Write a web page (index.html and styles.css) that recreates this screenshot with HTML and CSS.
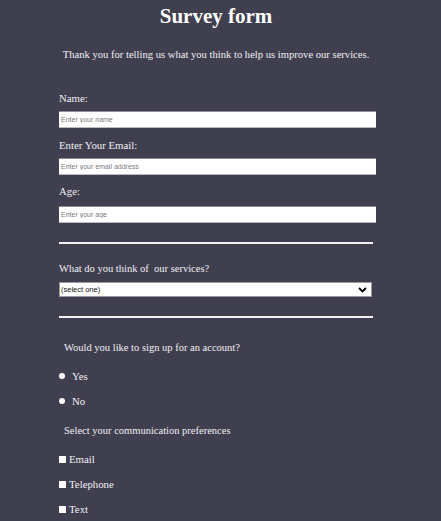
FILE: index.html
```html
<!DOCTYPE html>
<html lang="en">
<head>
<meta charset="utf-8">
<title>Survey form</title>
<link rel="stylesheet" href="styles.css">
</head>
<body>
<main class="page">
  <h1 class="title">Survey form</h1>
  <p class="intro">Thank you for telling us what you think to help us improve our services.</p>
  <form class="form">
    <label class="label label-name" for="name">Name:</label>
    <input class="field" id="name" type="text" placeholder="Enter your name">
    <label class="label label-email" for="email">Enter Your Email:</label>
    <input class="field" id="email" type="email" placeholder="Enter your email address">
    <label class="label label-age" for="age">Age:</label>
    <input class="field" id="age" type="text" placeholder="Enter your age">
    <hr class="rule rule-first">
    <label class="label label-services" for="services">What do you think of&nbsp; our services?</label>
    <div class="select-wrap">
      <select class="select" id="services">
        <option>(select one)</option>
        <option>Excellent</option>
        <option>Good</option>
        <option>Poor</option>
      </select>
      <svg class="chevron" width="9" height="6" viewBox="0 0 9 6"><path d="M1 1 L4.5 4.5 L8 1" fill="none" stroke="#000" stroke-width="1.8"/></svg>
    </div>
    <hr class="rule rule-second">
    <p class="question q-account">Would you like to sign up for an account?</p>
    <label class="choice choice-yes"><input class="radio" type="radio" name="account">Yes</label>
    <label class="choice choice-no"><input class="radio" type="radio" name="account">No</label>
    <p class="question q-prefs">Select your communication preferences</p>
    <label class="check check-first"><input class="box" type="checkbox">Email</label>
    <label class="check"><input class="box" type="checkbox">Telephone</label>
    <label class="check"><input class="box" type="checkbox">Text</label>
  </form>
</main>
</body>
</html>
```
FILE: styles.css
```css
html, body {
  margin: 0;
  padding: 0;
  background: #403f4f;
}
body {
  color: #f0f0f4;
  font-family: "Liberation Serif", "Times New Roman", serif;
  height: 521px;
  overflow: hidden;
}
.page {
  width: 441px;
  padding-right: 6px;
  box-sizing: border-box;
}
.title {
  margin: 2px 0 0;
  padding-right: 3px;
  font-size: 21px;
  line-height: 28px;
  font-weight: bold;
  text-align: center;
  color: #ffffff;
}
.intro {
  margin: 17px 0 0;
  padding-right: 3px;
  font-size: 10.6px;
  line-height: 16px;
  text-align: center;
}
.form {
  width: 317px;
  margin: 0 auto;
  display: flex;
  flex-direction: column;
  align-items: flex-start;
}
.label {
  display: block;
  font-size: 10.8px;
  line-height: 16px;
}
.label-name { margin-top: 27px; }
.label-email { margin-top: 9px; }
.label-age { margin-top: 8px; }
.field {
  margin-top: 5px;
  width: 317px;
  height: 17px;
  box-sizing: border-box;
  border: 0;
  border-top: 1px solid #8d8c97;
  border-bottom: 1px solid #b9b9c0;
  padding: 0 2px;
  background: #fff;
  font-family: "Liberation Sans", Arial, sans-serif;
  font-size: 7px;
  color: #333;
  outline: none;
}
.field::placeholder { color: #7a7a7a; }
.label-age + .field { margin-top: 7px; }
.rule {
  width: 314px;
  height: 2px;
  border: 0;
  background: #f4f4f6;
  margin: 0;
}
.rule-first { margin-top: 19px; }
.label-services { margin-top: 17px; font-size: 10.5px; }
.select-wrap {
  position: relative;
  margin-top: 5px;
  width: 313px;
  height: 15px;
}
.select {
  display: block;
  appearance: none;
  -webkit-appearance: none;
  width: 313px;
  height: 15px;
  box-sizing: border-box;
  border: 1px solid #9a99a3;
  background: #fff;
  padding: 0 1px;
  font-family: "Liberation Sans", Arial, sans-serif;
  font-size: 7.5px;
  color: #111;
  border-radius: 0;
  outline: none;
}
.chevron {
  position: absolute;
  right: 5px;
  top: 5px;
  pointer-events: none;
}
.rule-second { margin-top: 19px; }
.question {
  margin: 0;
  padding-left: 5px;
  font-size: 10.5px;
  line-height: 16px;
}
.q-account { margin-top: 22px; }
.choice, .check {
  display: flex;
  align-items: center;
  font-size: 10.8px;
  line-height: 16px;
}
.choice-yes { margin-top: 12px; }
.choice-no { margin-top: 9px; }
.radio {
  appearance: none;
  -webkit-appearance: none;
  width: 6px;
  height: 6px;
  border-radius: 50%;
  background: #fff;
  border: 0;
  margin: 0 7px 0 0;
}
.q-prefs { margin-top: 14px; }
.check { margin-top: 9px; }
.check-first { margin-top: 12px; }
.box {
  appearance: none;
  -webkit-appearance: none;
  width: 7px;
  height: 7px;
  background: #fff;
  border: 0;
  border-radius: 0;
  margin: 0 3px 0 0;
}
```
